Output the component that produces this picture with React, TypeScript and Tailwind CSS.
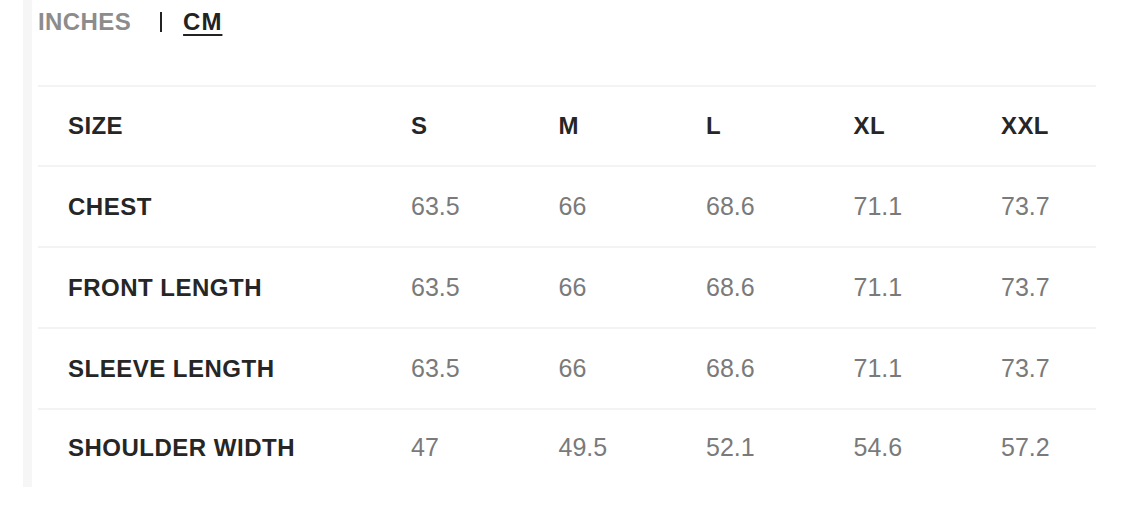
import React from "react";

const cols = ["S", "M", "L", "XL", "XXL"];
const rows: [string, string[]][] = [
  ["CHEST", ["63.5", "66", "68.6", "71.1", "73.7"]],
  ["FRONT LENGTH", ["63.5", "66", "68.6", "71.1", "73.7"]],
  ["SLEEVE LENGTH", ["63.5", "66", "68.6", "71.1", "73.7"]],
  ["SHOULDER WIDTH", ["47", "49.5", "52.1", "54.6", "57.2"]],
];

const grid = "grid grid-cols-[373px_147.5px_147.5px_147.5px_147.5px_94.5px] items-center";

export default function App() {
  return (
    <div className="w-[1125px] h-[509px] bg-white" style={{ fontFamily: '"Liberation Sans", Arial, sans-serif' }}>
      <div className="ml-[23px] h-[487px] border-l-[9px] border-[#f6f6f6] pl-[6px]">
        <div className="flex items-center h-[44px] text-[24px] font-bold tracking-[0.4px]">
          <span className="text-[#8c8c8c]">INCHES</span>
          <span className="ml-[29px] w-[2px] h-[20px] bg-[#222]" />
          <span className="ml-[21px] text-[#222] underline underline-offset-[4px] decoration-2 tracking-[1px]">CM</span>
        </div>
        <div className="mt-[41px] w-[1058px] border-t-2 border-[#f3f3f3]">
          <div className={`${grid} h-[80px] border-b-2 border-[#f3f3f3] text-[24px] font-bold text-[#262626]`}>
            <div className="pl-[30px] tracking-[0.4px]">SIZE</div>
            {cols.map((c) => (
              <div key={c} className="tracking-[0.4px]">{c}</div>
            ))}
          </div>
          {rows.map(([label, vals], i) => (
            <div
              key={label}
              className={`${grid} ${i < rows.length - 1 ? "h-[81px] border-b-2 border-[#f3f3f3]" : "h-[76px]"}`}
            >
              <div className="pl-[30px] text-[24px] font-bold text-[#262626] tracking-[0.5px]">{label}</div>
              {vals.map((v, j) => (
                <div key={j} className="text-[25px] text-[#7a7a7a]">{v}</div>
              ))}
            </div>
          ))}
        </div>
      </div>
    </div>
  );
}
